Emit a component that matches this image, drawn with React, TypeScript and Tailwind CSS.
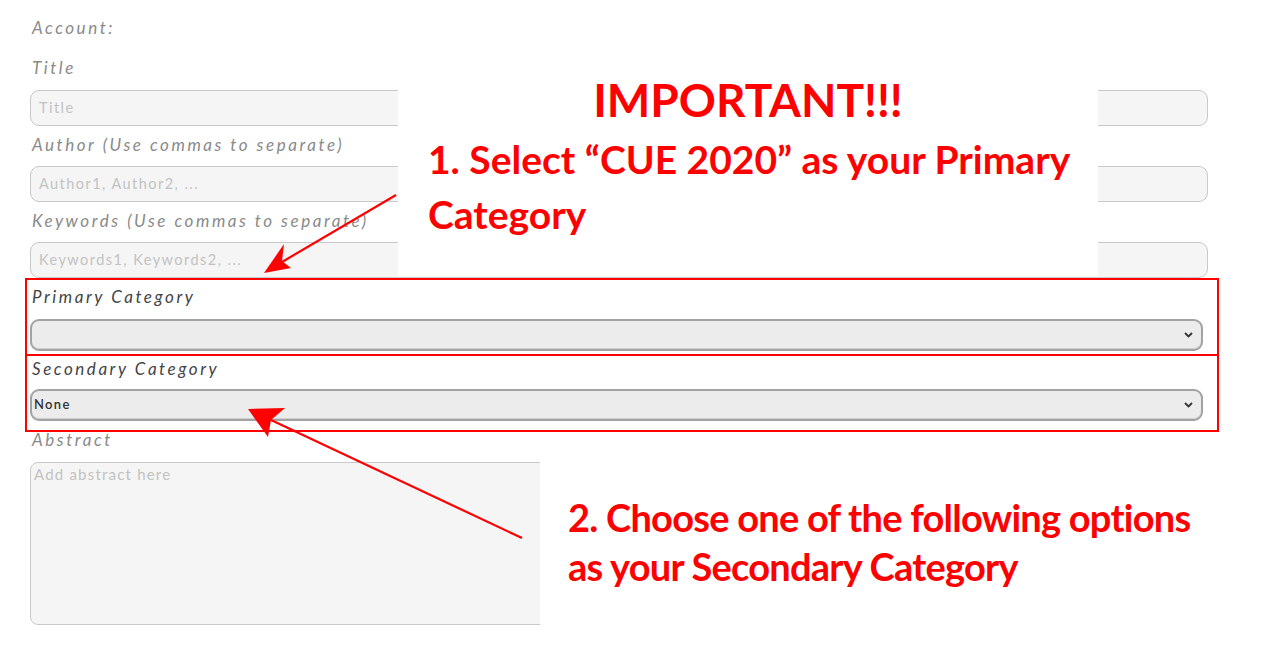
import React from "react";

const labelCls =
  "block h-[20px] text-[17px] leading-[20px] italic tracking-[0.15em] text-[#8a8a8a]";
const inputCls =
  "flex h-[36px] w-[1178px] items-center rounded-[9px] border-[1.5px] border-[#c9c9c9] bg-[#f5f5f5] px-[8px] text-[14.5px] text-[#c2c2c2] tracking-[0.1em]";

function Chevron() {
  return (
    <svg width="9" height="6" viewBox="0 0 9 6" className="shrink-0">
      <path d="M1 1 L4.5 4.5 L8 1" fill="none" stroke="#333" strokeWidth="1.8" />
    </svg>
  );
}

function SelectBox({ value }: { value?: string }) {
  return (
    <div className="flex h-[32px] w-[1173px] items-center justify-between rounded-[9px] border-2 border-[#a3a3a3] bg-[#ececec] pl-[2px] pr-[8px] shadow-[inset_0_-1px_0_#cfcfcf]">
      <span className="text-[13px] font-semibold tracking-[0.1em] text-[#333]">{value ?? ""}</span>
      <Chevron />
    </div>
  );
}

export default function App() {
  return (
    <div
      className="relative h-[654px] w-[1270px] overflow-hidden bg-white"
      style={{ fontFamily: "Lato, 'Open Sans', sans-serif" }}
    >
      {/* form */}
      <div className="pl-[30px] pt-[18px]">
        <span className={labelCls + " pl-[2px]"}>Account:</span>
        <span className={labelCls + " mt-[20px] mb-[12px] pl-[2px]"}>Title</span>
        <div className={inputCls}>Title</div>
        <span className={labelCls + " mt-[9px] mb-[11px] pl-[2px]"}>
          Author (Use commas to separate)
        </span>
        <div className={inputCls}>Author1, Author2, ...</div>
        <span className={labelCls + " mt-[9px] mb-[11px] pl-[2px]"}>
          Keywords (Use commas to separate)
        </span>
        <div className={inputCls + " h-[35px]"}>Keywords1, Keywords2, ...</div>

        <div className="-ml-[5px] w-[1194px] border-2 border-b-[1.5px] border-[#f00] pl-[3px] pt-[7px] pb-[3px]">
          <span className={labelCls + " mb-[12px] pl-[2px] !text-[#444]"}>Primary Category</span>
          <SelectBox />
        </div>
        <div className="-ml-[5px] w-[1194px] border-2 border-t-[1.5px] border-[#f00] pl-[3px] pt-[3px] pb-[9px]">
          <span className={labelCls + " mb-[10px] pl-[2px] !text-[#444]"}>Secondary Category</span>
          <SelectBox value="None" />
        </div>

        <span className={labelCls + " -mt-[2px] mb-[12px] pl-[2px]"}>Abstract</span>
        <div className="h-[163px] w-[560px] rounded-[8px] border-[1.5px] border-[#c9c9c9] bg-[#f5f5f5] px-[3px] text-[15px] leading-[22px] text-[#c2c2c2] tracking-[0.08em]">
          Add abstract here
        </div>
      </div>

      {/* annotation 1 */}
      <div className="absolute left-[398px] top-[80px] flex h-[197px] w-[700px] flex-col bg-white pl-[30px]">
        <div className="pr-[30px] text-center text-[46px] font-bold leading-[40px] text-[#f00]">
          IMPORTANT!!!
        </div>
        <div className="mt-[12px] text-[39px] font-bold leading-[55px] text-[#f00]">
          1. Select “CUE 2020” as your Primary
          <br />
          Category
        </div>
      </div>

      {/* annotation 2 */}
      <div className="absolute left-[540px] top-[436px] h-[218px] w-[730px] bg-white pl-[28px] pt-[57px]">
        <div className="text-[38px] font-bold leading-[49px] tracking-[-0.02em] text-[#f00]">
          2. Choose one of the following options
          <br />
          as your Secondary Category
        </div>
      </div>

      {/* arrows */}
      <svg className="pointer-events-none absolute left-0 top-0" width="1270" height="654">
        <line x1="396" y1="195" x2="282" y2="262" stroke="#f00" strokeWidth="2.2" />
        <polygon points="264,273 284,244 282,261 291,268" fill="#f00" />
        <line x1="522" y1="538" x2="271" y2="420" stroke="#f00" strokeWidth="2.2" />
        <polygon points="248,409 285,408 271,420 268,437" fill="#f00" />
      </svg>
    </div>
  );
}
